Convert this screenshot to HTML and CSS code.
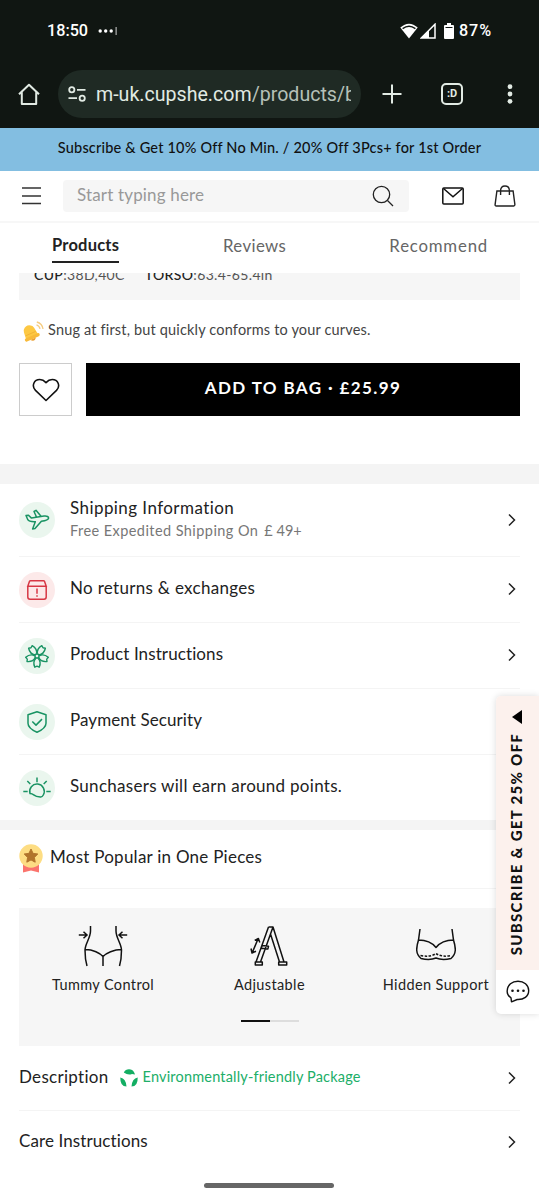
FILE: index.html
```
<!DOCTYPE html>
<html lang="en">
<head>
<meta charset="utf-8">
<title>Cupshe</title>
<link rel="stylesheet" href="styles.css">
</head>
<body>
<div class="phone">
  <div class="status">
    <span class="clock">18:50</span>
    <svg class="dots" width="20" height="10" viewBox="0 0 20 10"><g fill="#fff"><circle cx="2.2" cy="5" r="1.7"/><circle cx="7.7" cy="5" r="1.7"/><circle cx="13.2" cy="5" r="1.7"/><rect x="17.6" y="1" width="1" height="8" opacity=".8"/></g></svg>
    <svg class="wifi" width="18" height="16" viewBox="0 0 18 16"><path d="M9 15.5 0.3 4.6Q9-3.2 17.700 4.600Z" fill="#fff"/><path d="M2.600 5.600Q9 .8 15.400 5.600" fill="none" stroke="#101612" stroke-width="1.400"/></svg>
    <svg class="signal" width="16" height="16" viewBox="0 0 16 16"><path d="M15 1.200V15H1.200Z" fill="none" stroke="#fff" stroke-width="1.500"/><path d="M9 7V15H1.200Z" fill="#fff"/></svg>
    <svg class="battery" width="10" height="16" viewBox="0 0 10 16"><path d="M3 0h4v2h2q1 0 1 1v12q0 1-1 1H1q-1 0-1-1V3q0-1 1-1h2Z" fill="#fff"/><path d="M1.500 4.500h7" stroke="#101612" stroke-width="1"/></svg>
    <span class="percent">87%</span>
  </div>
  <div class="browser">
    <svg class="home" width="22" height="22" viewBox="0 0 22 22" fill="none" stroke="#e1eae3" stroke-width="2"><path d="M1 11.200 11 1.800l10 9.400M3.800 9v12h14.400V9" stroke-linejoin="round"/></svg>
    <div class="url">
      <svg width="18" height="16" viewBox="0 0 18 16" fill="none" stroke="#e1eae3" stroke-width="1.800"><circle cx="3.800" cy="3.800" r="2.600"/><path d="M9 3.800h8.500M.5 12.200H9"/><circle cx="14.200" cy="12.200" r="2.600"/></svg>
      <span class="address">m-uk.cupshe.com<span class="path">/products/b</span></span>
    </div>
    <svg class="plus" width="20" height="20" viewBox="0 0 20 20"><path d="M10 .5v19M.5 10h19" stroke="#e1eae3" stroke-width="2"/></svg>
    <div class="tabcount">:D</div>
    <svg class="more" width="6" height="20" viewBox="0 0 6 20" fill="#e1eae3"><circle cx="3" cy="2.700" r="2.400"/><circle cx="3" cy="10" r="2.400"/><circle cx="3" cy="17.300" r="2.400"/></svg>
  </div>
  <div class="promo">Subscribe &amp; Get 10% Off No Min. / 20% Off 3Pcs+ for 1st Order</div>
  <header class="header">
    <svg class="menu" width="19" height="18" viewBox="0 0 19 18"><path d="M0 1h19M0 9h19M0 16.500h19" stroke="#333" stroke-width="1.500"/></svg>
    <div class="search"><span>Start typing here</span>
      <svg width="22" height="22" viewBox="0 0 22 22" fill="none" stroke="#222" stroke-width="1.300"><circle cx="9.500" cy="9.500" r="8.200"/><path d="m15.500 15.500 5.500 5.500"/></svg>
    </div>
    <svg class="mail" width="22" height="18" viewBox="0 0 22 18" fill="none" stroke="#111" stroke-width="1.500"><rect x=".8" y="1" width="20.400" height="16" rx="1"/><path d="m1.500 1.500 9.500 8.300 9.500-8.300"/></svg>
    <svg class="bag" width="22" height="22" viewBox="0 0 22 22" fill="none" stroke="#222" stroke-width="1.400"><path d="M2.900 6h16.200l1.800 13.600q0 1.400-1.200 1.400H2.300q-1.300 0-1.200-1.400ZM6.600 10V5.500q0-4.500 4.400-4.500t4.400 4.500V10"/></svg>
  </header>
  <nav class="tabs"><span class="tab active">Products</span><span class="tab reviews">Reviews</span><span class="tab recommend">Recommend</span></nav>
  <div class="product">
    <div class="sizes"><span class="cup"><b>CUP</b>:38D,40C</span><span class="torso"><b>TORSO</b>:63.4-65.4in</span></div>
    <div class="fit">
      <svg width="22" height="22" viewBox="0 0 22 22"><g transform="rotate(-24 9 13)"><path d="M2.200 16.500C3.200 13 2.500 9 4 6.300q4.800-5 9.600 0c1.500 2.700 1 6.700 2 10.200Z" fill="#fdc843"/><path d="M3.400 12.500h11" stroke="#efb035" stroke-width=".8"/><rect x=".8" y="15" width="16" height="3.200" rx="1.600" fill="#f8ba3a"/><path d="M6 18.200h6q-3 4-6 0Z" fill="#eb9d2e"/></g><path d="M14.500 3.800q3 1 3.500 4M14.800 1q5.500 1.500 6.200 7" fill="none" stroke="#f5cc82" stroke-width="1.300"/></svg>
      <span>Snug at first, but quickly conforms to your curves.</span>
    </div>
    <div class="buy">
      <div class="wish"><svg width="28" height="24" viewBox="0 0 28 24" fill="none" stroke="#111" stroke-width="1.600"><path d="M14 22.500 3.500 12.400C-.8 7.800 2 1.500 7.800 1.500c2.700 0 4.200.9 6.200 3.100 2-2.200 3.500-3.100 6.200-3.100 5.800 0 8.600 6.300 4.300 10.900Z" stroke-linejoin="round"/></svg></div>
      <div class="add">ADD TO BAG · £25.99</div>
    </div>
  </div>
  <section class="info">
    <div class="row shipping">
      <span class="badge"><svg width="26" height="24" viewBox="0 0 26 24" fill="none" stroke="#199363" stroke-width="1.500" stroke-linejoin="round"><path d="M2 7.500l2.500-.3 3 2.900 12.500-2c3.200-.4 4.700.8 4.600 2-.2 1.800-3.600 2.600-7.200 3.100L11 20.600l-2.400.3 2.700-7.200c-4.800.2-6.600-.3-7.500-2ZM12.500 9 10 3.500l2-1.200 5 6"/></svg></span>
      <div class="label"><div class="t1">Shipping Information</div><div class="sub"><span>Free Expedited Shipping On</span><span class="price">£ 49+</span></div></div>
      <svg class="chev" width="10" height="14" viewBox="0 0 10 14"><path d="m2 1.500 5.500 5.500L2 12.500"/></svg>
    </div>
    <div class="row">
      <span class="badge red"><svg width="22" height="22" viewBox="0 0 22 22" fill="none" stroke="#d73744" stroke-width="1.500"><path d="M1.800 7.200h18.400L18.500 2.300Q18.200 1.700 17.500 1.700h-13q-.7 0-1 .6ZM1.800 7v11q0 2.200 2.200 2.200h14q2.200 0 2.200-2.200V7M11 9.500v5.300M11 16.200v1.600"/></svg></span>
      <div class="label t2">No returns &amp; exchanges</div>
      <svg class="chev" width="10" height="14" viewBox="0 0 10 14"><path d="m2 1.500 5.500 5.500L2 12.500"/></svg>
    </div>
    <div class="row">
      <span class="badge"><svg width="26" height="26" viewBox="-13 -13 26 26" fill="none" stroke="#199363" stroke-width="1.400" stroke-linejoin="round"><circle r="2"/><g id="petal"><path d="M-.8 2C-4 5-3.400 8.500-2.200 11.200l2.200-1 2.200 1C3.400 8.500 4 5 .8 2"/></g><use href="#petal" transform="rotate(72)"/><use href="#petal" transform="rotate(144)"/><use href="#petal" transform="rotate(216)"/><use href="#petal" transform="rotate(288)"/></svg></span>
      <div class="label t3">Product Instructions</div>
      <svg class="chev" width="10" height="14" viewBox="0 0 10 14"><path d="m2 1.500 5.500 5.500L2 12.500"/></svg>
    </div>
    <div class="row">
      <span class="badge"><svg width="22" height="24" viewBox="0 0 22 24" fill="none" stroke="#199363" stroke-width="1.500" stroke-linejoin="round"><path d="m11 1.800 9 3v8.400c0 4-3.500 6.600-9 9-5.500-2.400-9-5-9-9V4.800ZM6.300 11.500l3.700 3.600 6-6"/></svg></span>
      <div class="label t4">Payment Security</div>
    </div>
    <div class="row">
      <span class="badge"><svg width="28" height="22" viewBox="0 0 28 22" fill="none" stroke="#199363" stroke-width="1.500" stroke-linejoin="round"><path d="M7 16.500a7.300 7.300 0 1 1 13.300 1.500q-1.200 2.400-3 2-4.300-.3-6.600-2.200-1.600-1.200-3.700-1.300ZM14 .5v4.700M4.300 4l3 3M23.700 4l-3 3M.3 14.500h4.400M23.300 14.500h4.400"/></svg></span>
      <div class="label t5">Sunchasers will earn around points.</div>
    </div>
  </section>
  <section class="popular">
    <div class="rank">
      <svg width="24" height="30" viewBox="0 0 24 30"><path d="M4 20h16v8.500l-8-2-8 2Z" fill="#fb746d"/><circle cx="12" cy="12" r="11.700" fill="#fddd83"/><path d="m12 5 2.100 4.400 4.700.6-3.400 3.400.8 4.800-4.200-2.300-4.200 2.300.8-4.800L5.200 10l4.700-.6Z" fill="#b1742b" stroke="#b1742b" stroke-linejoin="round"/></svg>
      <span>Most Popular in One Pieces</span>
    </div>
    <div class="features">
      <div class="cards">
        <div class="feature tummy"><svg width="50" height="42" viewBox="0 0 50 42" fill="none" stroke="#111" stroke-width="1.500"><path d="M12.500 1v5c0 7-5.500 13-5.500 19 0 6 .5 11 2 16M38 1v5c0 7 5.500 13 5.500 19 0 6-.5 11-2 16M7.500 24.500C15 24.500 22 28 25 31.500 28 28 36 24.500 43.500 24.500M25 31.500V41M.8 10H8.500M5.500 6.800 9 10l-3.500 3.200M49.200 10H41.500M44.500 6.800 41 10l3.500 3.200"/></svg><span>Tummy Control</span></div>
        <div class="feature adjust"><svg width="38" height="42" viewBox="0 0 38 42" fill="none" stroke="#111" stroke-width="1.500" stroke-linejoin="round"><path d="M18.500 2h4.500l11 35h-4.500L20.500 9 10.500 37H6L18.500 2M23 2l-2.500 7M5.300 37h7v3h-7ZM28.700 37h8v3h-8ZM12 20.500l6.500.8-.6 2.600-6.600-.7ZM2.500 27 8 14M1 23.500l1 4.500 4-1.700M4.700 15.300 8.400 13.500 9.800 17.400"/></svg><span>Adjustable</span></div>
        <div class="feature support"><svg width="40" height="42" viewBox="0 0 40 42" fill="none" stroke="#111" stroke-width="1.500" stroke-linejoin="round"><path d="M4 4 2.500 15C0 23-.5 29 5 33.500q9 2 15-.5 6 2.500 15 .5C40.500 29 40 23 37.500 15L36 4M2.500 15Q14 15 20 22.500 26 15 37.500 15"/><path d="M4.500 30.500Q14 32.500 20 28.500 26 32.500 35.500 30.500" stroke-dasharray="2.500 1.500"/></svg><span>Hidden Support</span></div>
      </div>
      <div class="pager"><i></i></div>
    </div>
    <div class="row desc">
      <span class="dt">Description</span>
      <svg class="eco" width="18" height="18" viewBox="0 0 18 18" fill="#13ae63"><path d="M3.800 3.500Q5.500 .2 9 .2t5.200 3.300L15 5.500 12 5Q8 6.500 3.800 3.500ZM.3 8.500Q6 9.500 6.500 17.500 0 17.500.3 8.500ZM17.700 8.500Q12 9.500 11.500 17.500 18 17.500 17.700 8.500Z"/></svg>
      <span class="green">Environmentally-friendly Package</span>
      <svg class="chev" width="10" height="14" viewBox="0 0 10 14"><path d="m2 1.500 5.500 5.500L2 12.500"/></svg>
    </div>
    <div class="row care"><span>Care Instructions</span><svg class="chev" width="10" height="14" viewBox="0 0 10 14"><path d="m2 1.500 5.500 5.500L2 12.500"/></svg></div>
  </section>
  <aside class="float">
    <div class="offer">
      <svg width="10" height="14" viewBox="0 0 10 14"><path d="M10 0v14L0 7Z"/></svg>
      <span>SUBSCRIBE &amp; GET 25% OFF</span>
    </div>
    <div class="chat"><svg width="24" height="23" viewBox="0 0 24 23" fill="none" stroke="#111" stroke-width="1.400" stroke-linejoin="round"><path d="M5 17.800C2.200 16 1 13.500 1.200 10.800 1.500 5 6 1.200 12 1.200S22.500 5 22.700 10.500c0 6-5 9.300-11.500 9L5.500 21.800Z"/><g fill="#111" stroke="none"><circle cx="6.500" cy="10.800" r="1.300"/><circle cx="12" cy="10.800" r="1.300"/><circle cx="17.500" cy="10.800" r="1.300"/></g></svg></div>
  </aside>
  <div class="gesture"></div>
</div>
</body>
</html>
```
FILE: styles.css
```
* { box-sizing: border-box; }
body { margin: 0; background: #fff; }
svg { flex: none; display: block; }
.phone { position: relative; width: 539px; height: 1200px; overflow: hidden; font-family: Lato, sans-serif; font-size: 17px; line-height: 20px; color: #222; white-space: nowrap; }

/* system and browser bars */
.status { display: flex; align-items: center; height: 60px; padding: 2px 47px 0 47px; background: #101612; color: #fff; font: 500 16.200px/20px Roboto, sans-serif; }
.dots { margin-left: 10px; }
.wifi { margin-left: auto; }
.signal { margin-left: 2px; }
.battery { margin-left: 8px; }
.percent { width: 33px; margin-left: 5px; letter-spacing: .9px; }
.browser { display: flex; align-items: center; height: 68px; padding: 0 26px 0 18px; background: #101612; }
.url { display: flex; align-items: center; width: 303px; height: 48px; margin-left: 18px; padding: 0 10px; border-radius: 24px; background: #1f2a24; }
.address { width: 255px; margin: 2px 0 0 10px; overflow: hidden; color: #e1eae3; font: 400 19.600px/26px Roboto, sans-serif; }
.path { color: #b5c0b8; }
.plus { margin-left: 21px; }
.tabcount { width: 22px; height: 22px; margin-left: 39px; border: 2px solid #e1eae3; border-radius: 5px; color: #e1eae3; text-align: center; font: 700 11px/17px Roboto, sans-serif; }
.more { margin-left: auto; }

/* shop header */
.promo { height: 43px; background: #83bee1; color: #111; font-size: 14.500px; font-weight: 500; line-height: 40px; letter-spacing: .19px; text-align: center; }
.header { display: flex; align-items: center; height: 52px; padding: 0 23px 0 22px; border-bottom: 2px solid #f7f7f7; }
.search { display: flex; align-items: center; justify-content: space-between; width: 346px; height: 32px; margin-left: 22px; padding: 0 15px 0 14px; border-radius: 4px; background: #f6f6f6; color: #999; letter-spacing: .16px; }
.search span { margin-top: -3px; }
.mail { margin-left: 33px; }
.bag { margin-left: auto; }
.tabs { display: flex; height: 50px; padding: 11px 52px 0; font-size: 16.800px; line-height: 23px; color: #666; }
.active { width: 67px; height: 29px; border-bottom: 2px solid #222; color: #222; font-size: 16.500px; font-weight: 700; letter-spacing: .2px; }
.reviews { margin-left: 104px; letter-spacing: .4px; }
.recommend { margin-left: auto; letter-spacing: .8px; margin-right: -1px; }

/* product */
.product { height: 191px; padding: 0 19px; }
.sizes { display: flex; align-items: flex-end; height: 27px; padding: 0 15px 15px; overflow: hidden; background: #f6f6f6; color: #555; font-size: 14px; letter-spacing: .35px; line-height: 20px; }
.sizes b { font-weight: 500; color: #222; }
.torso { margin-left: 20px; }
.fit { display: flex; align-items: center; height: 63px; padding-left: 3px; color: #444; font-size: 14.500px; letter-spacing: .17px; }
.fit span { margin: -3px 0 0 4px; }
.buy { display: flex; gap: 14px; height: 53px; }
.wish { display: flex; align-items: center; justify-content: center; width: 53px; border: 1px solid #ccc; }
.add { flex: 1; background: #000; color: #fff; text-align: center; font-weight: 700; line-height: 50px; letter-spacing: 1.390px; }

/* information rows */
.info { padding: 0 19px; border: solid #f4f4f4; border-width: 20px 0 10px; }
.row { display: flex; align-items: center; height: 66px; border-bottom: 1px solid #f4f4f4; }
.row:last-child { height: 65px; border-bottom: 0; }
.shipping { height: 73px; }
.badge { display: flex; align-items: center; justify-content: center; width: 36px; height: 36px; margin-right: 15px; border-radius: 50%; background: #eaf6ee; }
.badge.red { background: #fce9e9; }
.label { margin-top: -3px; }
.t1 { letter-spacing: .43px; line-height: 23px; }
.t2 { letter-spacing: .31px; }
.t3, .care span { letter-spacing: .1px; }
.dt { letter-spacing: .3px; }
.t4 { letter-spacing: .09px; }
.t5 { letter-spacing: .29px; }
.sub { display: flex; gap: 6px; color: #777; font-size: 14.500px; line-height: 23px; letter-spacing: .43px; }
.price { letter-spacing: 0; }
.chev { margin: -1px 3px 0 auto; fill: none; stroke: #222; stroke-width: 1.500; }

/* popular */
.popular { padding: 0 19px; }
.rank { display: flex; align-items: center; gap: 7px; height: 59px; border-bottom: 1px solid #f4f4f4; letter-spacing: .25px; }
.rank span { margin-top: -4px; }
.features { height: 138px; margin-top: 19px; padding-top: 17px; background: #f6f6f6; }
.cards { display: flex; justify-content: space-between; height: 94px; padding: 0 31px 0 33px; font-size: 14.500px; letter-spacing: .38px; }
.feature { display: flex; flex-direction: column; align-items: center; gap: 8px; }
.adjust { padding-left: 2px; }
.pager { width: 58px; height: 2px; margin: 1px auto 0 222px; background: #ddd; }
.pager i { display: block; width: 29px; height: 2px; background: #111; }
.desc { height: 65px; padding-bottom: 3px; }
.desc .chev { margin-top: 2px; }
.eco { margin: 3px 5px 0 11px; }
.green { color: #20ae68; font-size: 14.500px; letter-spacing: .18px; }
.row.care { height: 60px; }
.care .chev { margin-top: 2px; }

/* overlays */
.float { position: absolute; right: 0; top: 696px; width: 43px; height: 318px; border-radius: 5px 0 0 5px; overflow: hidden; background: #fff; box-shadow: 0 0 7px rgba(0,0,0,.14); }
.offer { display: flex; flex-direction: column; align-items: center; height: 274px; padding: 14px 1px 0 0; background: #fcf1ed; color: #111; }
.offer svg { fill: #000; }
.offer span { margin: 9px 3px 0 0; font-size: 15px; font-weight: 900; line-height: 20px; letter-spacing: 1.290px; writing-mode: vertical-rl; transform: rotate(180deg); }
.chat { display: flex; align-items: center; justify-content: center; height: 42px; }
.gesture { position: absolute; left: 204px; top: 1183px; width: 130px; height: 5px; border-radius: 3px; background: #666; }
```
